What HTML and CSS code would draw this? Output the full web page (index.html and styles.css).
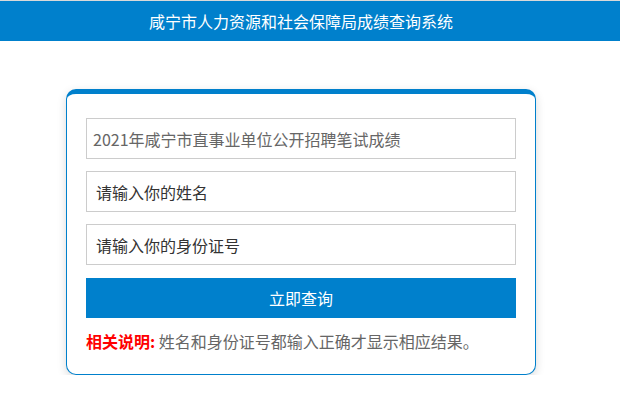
FILE: index.html
```html
<!DOCTYPE html>
<html lang="zh-CN">
<head>
<meta charset="utf-8">
<title>咸宁市人力资源和社会保障局成绩查询系统</title>
<link rel="stylesheet" href="styles.css">
</head>
<body>
<header class="topbar">咸宁市人力资源和社会保障局成绩查询系统</header>
<main class="page">
  <form class="card">
    <input class="field field-exam" type="text" value="2021年咸宁市直事业单位公开招聘笔试成绩" readonly>
    <input class="field" type="text" placeholder="请输入你的姓名">
    <input class="field" type="text" placeholder="请输入你的身份证号">
    <button class="submit" type="button">立即查询</button>
    <p class="note"><strong class="note-label">相关说明:</strong> 姓名和身份证号都输入正确才显示相应结果。</p>
  </form>
</main>
</body>
</html>
```
FILE: styles.css
```css
html, body {
  margin: 0;
  padding: 0;
  background: #fff;
  font-family: "Noto Sans CJK SC", "Noto Sans", "Liberation Sans", sans-serif;
}
.topbar {
  border-top: 1px solid #d9d9d9;
  height: 40px;
  line-height: 40px;
  padding-right: 18px;
  background: #0080cc;
  color: #fff;
  font-size: 16px;
  text-align: center;
}
.page {
  padding: 48px 0 0 66px;
}
.card {
  box-sizing: border-box;
  width: 470px;
  border: 1px solid #0080cc;
  border-top-width: 5px;
  border-radius: 10px;
  padding: 24px 19px 21px;
  background: #fff;
  box-shadow: 0 3px 10px rgba(0, 0, 0, 0.15);
  display: flex;
  flex-direction: column;
}
.field {
  box-sizing: border-box;
  width: 430px;
  height: 41px;
  margin: 0 0 12px;
  padding: 0 9px;
  border: 1px solid #cccccc;
  border-radius: 0;
  font-family: inherit;
  font-size: 16px;
  color: #333;
  outline: none;
  background: #fff;
}
.field-exam {
  color: #666;
  padding-left: 6px;
}
.field::placeholder {
  color: #333;
  opacity: 1;
}
.submit {
  margin-top: 1px;
  height: 40px;
  width: 430px;
  border: 0;
  background: #0080cc;
  color: #fff;
  font-family: inherit;
  font-size: 16px;
  cursor: pointer;
}
.note {
  margin: 11px 0 0;
  font-size: 16px;
  line-height: 24px;
  color: #666;
}
.note-label {
  color: #ff0000;
  font-weight: bold;
}
```
